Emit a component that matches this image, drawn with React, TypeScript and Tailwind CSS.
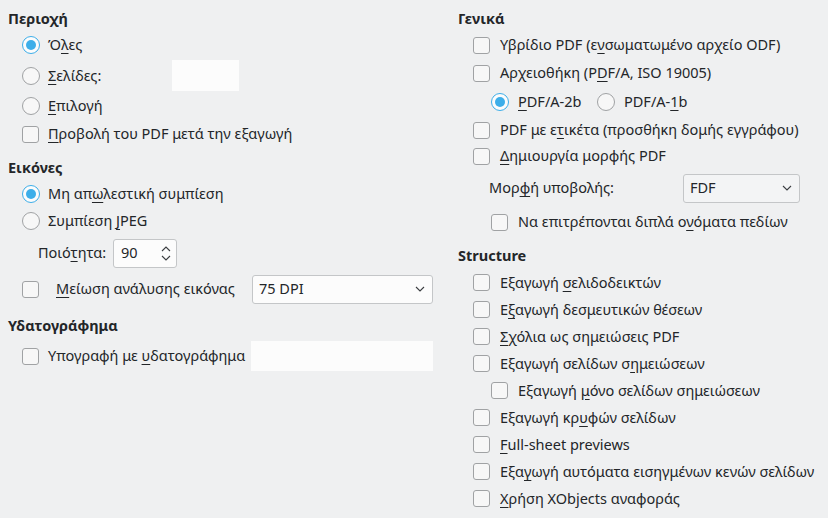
import React from 'react';

const font = { fontFamily: '"Noto Sans", "DejaVu Sans", sans-serif' };

function Radio({ checked }: { checked?: boolean }) {
  return checked ? (
    <span className="flex h-[18px] w-[18px] shrink-0 items-center justify-center rounded-full border-[1.5px] border-[#3daee9] bg-[#fcfcfc]">
      <span className="h-[10px] w-[10px] rounded-full bg-[#3daee9]" />
    </span>
  ) : (
    <span className="h-[18px] w-[18px] shrink-0 rounded-full border border-[#a0a2a4] bg-[#f7f7f7]" />
  );
}

function Check() {
  return <span className="h-[17px] w-[17px] shrink-0 rounded-[3px] border border-[#a0a2a4] bg-[#f7f7f7]" />;
}

function Chevron() {
  return (
    <svg width="10" height="6" viewBox="0 0 10 6" className="text-[#3b3e41]">
      <path d="M1 1l4 4 4-4" fill="none" stroke="currentColor" strokeWidth="1.1" />
    </svg>
  );
}

function Heading({ children, h = 'h-[24px]' }: { children: React.ReactNode; h?: string }) {
  return <div className={`${h} flex items-center font-bold`}>{children}</div>;
}

function Row({ h = 'h-[28px]', pl = 'pl-[14px]', children }: { h?: string; pl?: string; children: React.ReactNode }) {
  return <div className={`${h} ${pl} flex items-center whitespace-nowrap`}>{children}</div>;
}

const U = ({ children }: { children: React.ReactNode }) => (
  <span className="underline underline-offset-[3px]">{children}</span>
);

export default function App() {
  return (
    <div
      className="flex h-[518px] w-[828px] overflow-hidden bg-[#eff0f1] pt-[7px] text-[14.5px] text-[#232629]"
      style={font}
    >
      {/* left column */}
      <div className="flex w-[458px] shrink-0 flex-col pl-[8px] pr-[25px]">
        <Heading>Περιοχή</Heading>
        <Row>
          <Radio checked />
          <span className="ml-[8px]">Ό<U>λ</U>ες</span>
        </Row>
        <Row h="h-[33px]">
          <Radio />
          <span className="ml-[8px] w-[124px]"><U>Σ</U>ελίδες:</span>
          <div className="h-[31px] w-[67px] bg-[#fcfcfc]" />
        </Row>
        <Row>
          <Radio />
          <span className="ml-[8px]"><U>Ε</U>πιλογή</span>
        </Row>
        <Row>
          <Check />
          <span className="ml-[9px]"><U>Π</U>ροβολή του PDF μετά την εξαγωγή</span>
        </Row>

        <div className="h-[8px]" />
        <Heading>Εικόνες</Heading>
        <Row>
          <Radio checked />
          <span className="ml-[8px]">Μη απ<U>ω</U>λεστική συμπίεση</span>
        </Row>
        <Row h="h-[26px]">
          <Radio />
          <span className="ml-[8px]">Συμπίεση <U>J</U>PEG</span>
        </Row>
        <Row h="h-[38px]" pl="pl-[30px]">
          <span className="w-[75px]">Ποιό<U>τ</U>ητα:</span>
          <div className="flex h-[29px] w-[64px] items-center justify-between rounded-[3px] border border-[#c4c6c8] bg-[#fcfcfc] pl-[7px] pr-[5px]">
            <span>90</span>
            <span className="flex flex-col gap-[3px]">
              <svg width="10" height="6" viewBox="0 0 10 6" className="text-[#3b3e41]">
                <path d="M1 5l4-4 4 4" fill="none" stroke="currentColor" strokeWidth="1.1" />
              </svg>
              <Chevron />
            </span>
          </div>
        </Row>
        <Row h="h-[34px]">
          <Check />
          <span className="ml-[17px] w-[196px]"><U>Μ</U>είωση ανάλυσης εικόνας</span>
          <div className="flex h-[29px] w-[181px] items-center justify-between rounded-[3px] border border-[#c4c6c8] bg-[#fcfcfc] pl-[6px] pr-[7px]">
            <span>75 DPI</span>
            <Chevron />
          </div>
        </Row>

        <div className="h-[8px]" />
        <Heading>Υδατογράφημα</Heading>
        <Row h="h-[36px]">
          <Check />
          <span className="ml-[9px] w-[203px]">Υπογραφή με <U>υ</U>δατογράφημα</span>
          <div className="h-[30px] w-[182px] bg-[#fcfcfc]" />
        </Row>
      </div>

      {/* right column */}
      <div className="flex flex-1 flex-col">
        <Heading>Γενικά</Heading>
        <Row pl="pl-[15px]">
          <Check />
          <span className="ml-[10px]">Υβρίδιο PDF (ε<U>ν</U>σωματωμένο αρχείο ODF)</span>
        </Row>
        <Row pl="pl-[15px]">
          <Check />
          <span className="ml-[10px]">Αρχειοθήκη (P<U>D</U>F/A, ISO 19005)</span>
        </Row>
        <Row h="h-[30px]" pl="pl-[33px]">
          <Radio checked />
          <span className="ml-[9px] w-[79px]"><U>P</U>DF/A-2b</span>
          <Radio />
          <span className="ml-[9px]">PDF/A-<U>1</U>b</span>
        </Row>
        <Row h="h-[26px]" pl="pl-[15px]">
          <Check />
          <span className="ml-[10px]">PDF με ε<U>τ</U>ικέτα (προσθήκη δομής εγγράφου)</span>
        </Row>
        <Row h="h-[26px]" pl="pl-[15px]">
          <Check />
          <span className="ml-[10px]"><U>Δ</U>ημιουργία μορφής PDF</span>
        </Row>
        <Row h="h-[38px]" pl="pl-[31px]">
          <span className="w-[194px]">Μορ<U>φ</U>ή υποβολής:</span>
          <div className="flex h-[29px] w-[117px] items-center justify-between rounded-[3px] border border-[#c4c6c8] bg-[#f3f4f5] pl-[6px] pr-[7px]">
            <span>FDF</span>
            <Chevron />
          </div>
        </Row>
        <Row h="h-[30px]" pl="pl-[33px]">
          <Check />
          <span className="ml-[10px]">Να επιτρέπονται διπλά ο<U>ν</U>όματα πεδίων</span>
        </Row>

        <div className="h-[5px]" />
        <Heading h="h-[27px]">Structure</Heading>
        {[
          <>Εξαγωγή <U>σ</U>ελιδοδεικτών</>,
          <>Ε<U>ξ</U>αγωγή δεσμευτικών θέσεων</>,
          <><U>Σ</U>χόλια ως σημειώσεις PDF</>,
          <>Εξαγωγή σελίδων σ<U>η</U>μειώσεων</>,
        ].map((t, i) => (
          <Row key={i} h="h-[27px]" pl="pl-[15px]">
            <Check />
            <span className="ml-[10px]">{t}</span>
          </Row>
        ))}
        <Row h="h-[27px]" pl="pl-[33px]">
          <Check />
          <span className="ml-[10px]">Εξαγωγή <U>μ</U>όνο σελίδων σημειώσεων</span>
        </Row>
        {[
          <>Εξαγωγή κρ<U>υ</U>φών σελίδων</>,
          <><U>F</U>ull-sheet previews</>,
          <>Εξα<U>γ</U>ωγή αυτόματα εισηγμένων κενών σελίδων</>,
          <><U>Χ</U>ρήση XObjects αναφοράς</>,
        ].map((t, i) => (
          <Row key={i} h="h-[27px]" pl="pl-[15px]">
            <Check />
            <span className="ml-[10px]">{t}</span>
          </Row>
        ))}
      </div>
    </div>
  );
}
